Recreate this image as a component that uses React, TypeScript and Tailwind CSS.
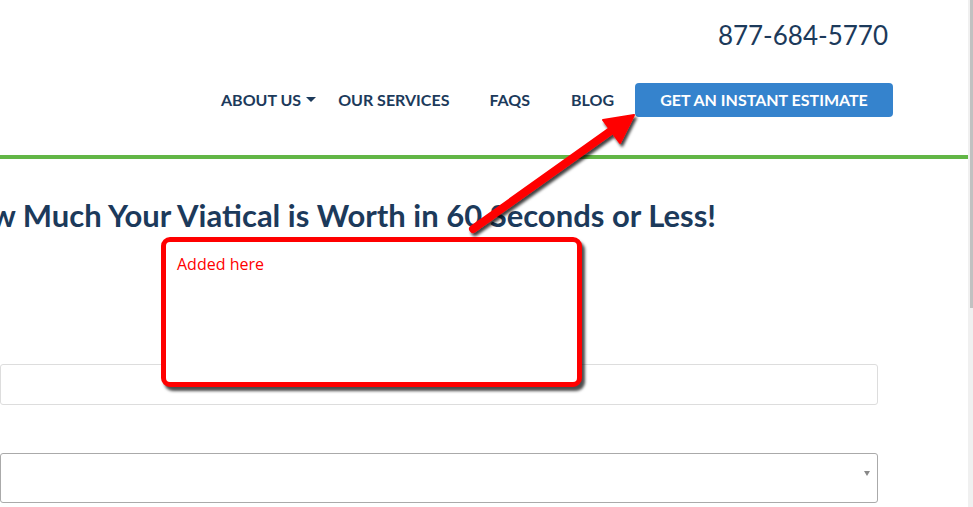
import React from 'react';

const navy = 'text-[#1c3a5b]';

function Arrow() {
  // annotation arrow drawn over the page
  return (
    <svg className="pointer-events-none absolute inset-0" width="973" height="507">
      <defs>
        <filter id="sh" x="-20%" y="-20%" width="140%" height="140%">
          <feDropShadow dx="2" dy="3" stdDeviation="1.5" floodColor="#000" floodOpacity="0.75" />
        </filter>
      </defs>
      <g filter="url(#sh)">
        <line x1="473" y1="229" x2="612" y2="130" stroke="#ff0000" strokeWidth="8" strokeLinecap="round" />
        <polygon points="634,115 603,120 620,143" fill="#ff0000" stroke="#ff0000" strokeWidth="2" strokeLinejoin="round" />
      </g>
    </svg>
  );
}

export default function App() {
  return (
    <div className="relative flex h-[507px] w-[973px] overflow-hidden bg-white font-['Lato',sans-serif]">
      <div className="flex w-[968px] flex-col">
        <div className="flex justify-end pr-[80px] pt-[18px]">
          <span className={`text-[26px] leading-[34px] ${navy}`}>877-684-5770</span>
        </div>
        <nav className={`mt-[31px] flex items-center justify-end pr-[75px] text-[16px] font-bold uppercase ${navy}`}>
          <a className="flex items-center">
            ABOUT US
            <svg width="10" height="6" className="ml-[5px]" viewBox="0 0 10 6">
              <path d="M0 0 L10 0 L5 5 Z" fill="#1c3a5b" />
            </svg>
          </a>
          <a className="ml-[22px]">OUR SERVICES</a>
          <a className="ml-[40px]">FAQS</a>
          <a className="ml-[41px]">BLOG</a>
          <button className="ml-[21px] h-[34px] w-[258px] rounded-[4px] bg-[#3583cd] text-[16px] font-bold text-white">
            GET AN INSTANT ESTIMATE
          </button>
        </nav>
        <div className="mt-[38px] h-[4px] bg-[#62b646]" />
        <h1 className={`ml-[-50px] mt-[36px] whitespace-nowrap text-[31px] font-bold leading-[40px] ${navy}`}>
          How Much Your Viatical is Worth in 60 Seconds or Less!
        </h1>
        <div className="mt-[129px] h-[41px] w-[878px] rounded-[3px] border border-[#dddddd] bg-white" />
        <div className="relative mt-[48px] h-[50px] w-[878px] rounded-[3px] border border-[#aaaaaa] bg-white">
          <svg className="absolute right-[7px] top-[17px]" width="6" height="5" viewBox="0 0 6 5">
            <path d="M0 0 L6 0 L3 5 Z" fill="#888" />
          </svg>
        </div>
      </div>
      <div className="relative w-[5px] bg-[#f0f0f0]">
        <div className="absolute right-0 top-0 h-[308px] w-[3px] bg-[#c1c1c1]" />
      </div>

      <div className="absolute left-[161px] top-[237px] h-[150px] w-[421px] rounded-[9px] border-[5px] border-[#ff0000] bg-white px-[11px] py-[10px] shadow-[3px_4px_3px_rgba(0,0,0,0.7)]">
        <span className="font-['Open_Sans',sans-serif] text-[16px] text-[#ff0000]">Added here</span>
      </div>
      <Arrow />
    </div>
  );
}
